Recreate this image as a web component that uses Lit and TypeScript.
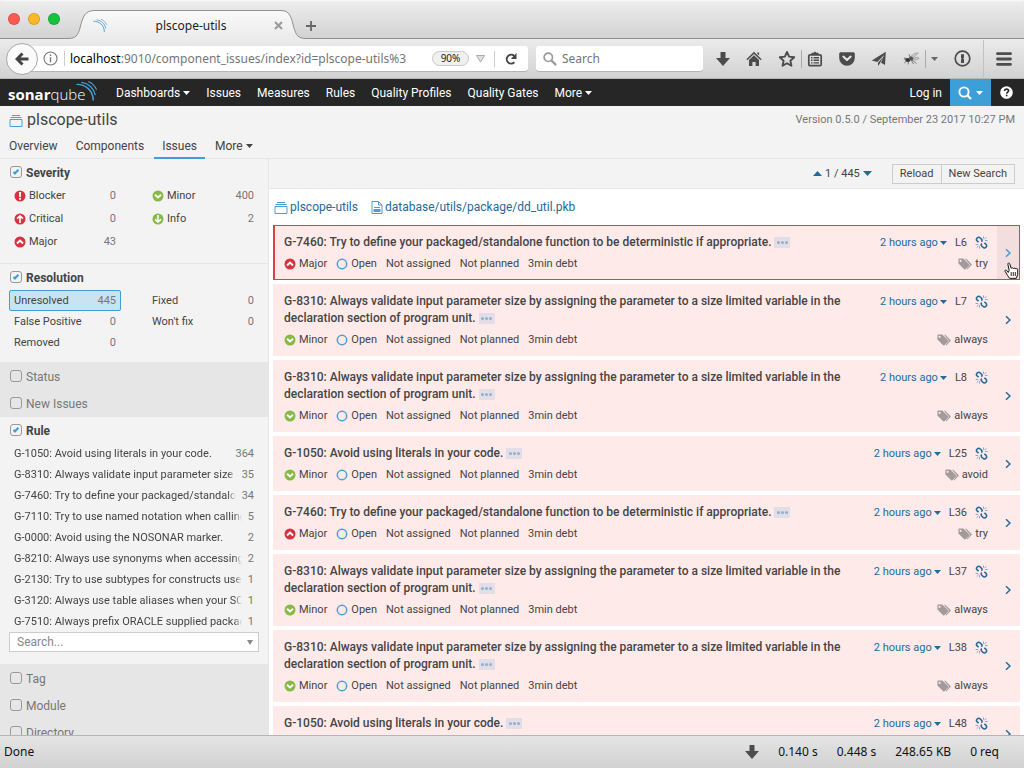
import { LitElement, html, css, nothing } from "lit";
import { customElement, property } from "lit/decorators.js";
import { classMap } from "lit/directives/class-map.js";

const waves = html`<svg viewBox="0 0 20 19" class="waves" aria-hidden="true">
  <g fill="none" stroke="#4b9fd5" stroke-linecap="round">
    <path stroke-width="1.400" d="M1 3.200C9 3.200 16.200 9 16.400 18.200" />
    <path stroke-width="1.200" d="M5.500 1.200C12 2 17 7 18.200 13" />
    <path stroke-width="1" d="M12 .6C15 1.800 18 4.500 19.400 8" />
  </g>
</svg>`;

const projectIcon = html`<svg viewBox="0 0 14 13" width="14" height="13" aria-hidden="true">
  <g fill="none" stroke="#4b9fd5">
    <path d="M1 5.500h12v7H1z" stroke-linejoin="round" />
    <path d="M1.500 3.500h11M3 1.500h8" />
  </g>
</svg>`;

const fileIcon = html`<svg viewBox="0 0 12 13" width="12" height="13" aria-hidden="true">
  <path d="M1 .5h6.500l3.500 3.500v8.500H1zM7.500.5V4H11" fill="none" stroke="#4b9fd5" />
  <path d="M3 6h6v1H3zM2.500 8h7v3h-7z" fill="#4b9fd5" />
</svg>`;

const severityPaths: Record<string, unknown> = {
  Blocker: html`<svg viewBox="0 0 12 12" width="12" height="12" aria-hidden="true"><circle cx="6" cy="6" r="5.500" fill="#d4333f" /><path d="M4.900 2h2.200L6.800 7.200H5.200zM5.100 8.100h1.800v1.700H5.100z" fill="#fff" /></svg>`,
  Critical: html`<svg viewBox="0 0 12 12" width="12" height="12" aria-hidden="true"><circle cx="6" cy="6" r="5.500" fill="#d4333f" /><path d="M6 10V3M3.100 5.700 6 2.900l2.900 2.800" fill="none" stroke="#fff" stroke-width="1.600" /></svg>`,
  Major: html`<svg viewBox="0 0 12 12" width="12" height="12" aria-hidden="true"><circle cx="6" cy="6" r="5.500" fill="#d4333f" /><path d="M3 7.400 6 4.600l3 2.800" fill="none" stroke="#fff" stroke-width="2" /></svg>`,
  Minor: html`<svg viewBox="0 0 12 12" width="12" height="12" aria-hidden="true"><circle cx="6" cy="6" r="5.500" fill="#85bb43" /><path d="M3 4.700 6 7.500l3-2.800" fill="none" stroke="#fff" stroke-width="2" /></svg>`,
  Info: html`<svg viewBox="0 0 12 12" width="12" height="12" aria-hidden="true"><circle cx="6" cy="6" r="5.500" fill="#85bb43" /><path d="M6 2v7M3.100 6.300 6 9.100l2.900-2.800" fill="none" stroke="#fff" stroke-width="1.600" /></svg>`,
};

const openIcon = html`<svg viewBox="0 0 12 12" width="12" height="12" aria-hidden="true"><circle cx="6" cy="6" r="4.700" fill="none" stroke="#4b9fd5" stroke-width="1.500" /></svg>`;

const tagsIcon = html`<svg viewBox="0 0 14 12" width="14" height="12" aria-hidden="true">
  <path d="M7 .8h1.300l5.200 5.100c.4.400.4.800 0 1.200L9.200 11.400l-.6-.6 3.600-4z" fill="#a39a9b" />
  <path fill-rule="evenodd" d="M.4 1.300C.4.900.7.600 1.100.6h4.200L11.200 6.300c.4.400.4.800 0 1.200L7.400 11.300c-.4.400-.8.400-1.200 0L.4 5.500zM2.600 1.700a1.100 1.100 0 1 0 .01 0z" fill="#a39a9b" />
</svg>`;

const linkIcon = html`<svg viewBox="0 0 13 13" width="13" height="13" aria-hidden="true">
  <g fill="none" stroke="#236a97" stroke-width="1.600">
    <path d="M6.300 5.600C7.300 4.900 7.200 4 6.500 3.200L5.300 2C4.300 1.100 3.100 1.100 2.200 2S1.300 4 2.100 4.800L3.600 6.200" />
    <path d="M9.400 6.800 10.900 8.200c1 1 1 2.200.1 3.100s-2.200.9-3.100 0L6.600 10C5.900 9.200 5.800 8.400 6.700 7.500" />
  </g>
  <path d="M8.500.5v2.300M11.300 1.300 9.500 3.200M12.600 4.500H10M4.500 12.500v-2.300M.6 8.500h2.600M1.600 11.700l1.900-1.900" stroke="#7eabc6" stroke-width="1" />
</svg>`;

const chevron = html`<svg viewBox="0 0 6 10" width="6" height="10" aria-hidden="true"><path d="M1 1.200 5 5 1 8.800" fill="none" stroke="currentColor" stroke-width="1.500" /></svg>`;

const caret = html`<svg viewBox="0 0 7 4" width="7" height="4" class="caret" aria-hidden="true"><path d="M0 0h7L3.500 4z" fill="currentColor" /></svg>`;

const downArrow = html`<svg viewBox="0 0 14 14" width="14" height="14" aria-hidden="true"><path d="M4.500 0h5v6H14L7 14 0 6h4.500z" fill="#4c4c4c" /></svg>`;

const toolIcons = {
  home: html`<svg viewBox="0 0 16 16" width="16" height="16"><path d="M8 .8 15.600 8.200l-1 1L8 2.900l-6.600 6.300-1-1zM8 4.200l5 4.800v6H9.600v-4H6.400v4H3V9zM11.300 1.500h1.800v3l-1.800-1.700z" fill="#4c4c4c" /></svg>`,
  star: html`<svg viewBox="0 0 18 18" width="18" height="18"><path d="m9 1.900 2.100 4.700 5.100.6-3.800 3.500 1 5.100L9 13.200l-4.400 2.600 1-5.100L1.800 7.200l5.100-.6z" fill="none" stroke="#4c4c4c" stroke-width="1.900" stroke-linejoin="round" /></svg>`,
  list: html`<svg viewBox="0 0 16 16" width="16" height="16"><rect x="1.800" y="3.800" width="12.400" height="10.900" rx="1.300" fill="none" stroke="#4c4c4c" stroke-width="1.700" /><path d="M4.500 3.500V1.800h2L8 .6l1.500 1.200h2v1.700zM4 6h1.500v1.400H4zM6.500 6H12v1.400H6.500zM4 8.600h1.500V10H4zM6.500 8.600H12V10H6.500zM4 11.200h1.500v1.400H4zM6.500 11.200H12v1.400H6.500z" fill="#4c4c4c" /></svg>`,
  pocket: html`<svg viewBox="0 0 16 16" width="16" height="16"><path d="M1.800 1.300h12.400c1 0 1.600.7 1.600 1.600V7a7.800 7.800 0 0 1-15.600 0V2.900c0-.9.700-1.600 1.600-1.600z" fill="#4c4c4c" /><path d="m4.300 5.600 3.700 3.500 3.700-3.500" fill="none" stroke="#e8e8e8" stroke-width="2" stroke-linecap="round" stroke-linejoin="round" /></svg>`,
  plane: html`<svg viewBox="0 0 16 16" width="16" height="16"><path d="M14.800.8 14 14l-4-2.200L13 4 6.300 11 .8 9.600zM7 11.800 12 6 8.800 12.500 7 15z" fill="#4c4c4c" /></svg>`,
  bug: html`<svg viewBox="0 0 17 14" width="17" height="14"><path d="M7 5 12 1.300l3.200-.4-2.300 2.700L9 6zM9 6.500l6-1.300 1.200 1.200-2.500 1.400L9 8z" fill="#c9c9c9" stroke="#8d8d8d" stroke-width=".6" /><ellipse cx="4.800" cy="8" rx="2.600" ry="2.100" fill="#333" /><ellipse cx="8" cy="6.500" rx="2.200" ry="1.900" fill="#555" /><path d="M1 5.800 3.800 7M1.200 11l2.500-2M5.500 9.500 5 12.500M8 8l2.500 4M9 8l4.500 3.500M7 5 6 2.200M3 6.500.8 7.500" fill="none" stroke="#555" stroke-width=".7" /></svg>`,
  keyhole: html`<svg viewBox="0 0 17 17" width="17" height="17"><circle cx="8.500" cy="8.500" r="7.300" fill="none" stroke="#4c4c4c" stroke-width="1.700" /><path d="M7 4.200h3v3.300l-.8.900.8.600v4H7V9.700l.8-.9-.8-.6z" fill="#4c4c4c" /></svg>`,
  menu: html`<svg viewBox="0 0 16 14" width="16" height="14"><path d="M1.500 1.700h13M1.500 7h13M1.500 12.300h13" stroke="#4c4c4c" stroke-width="2.800" stroke-linecap="round" /></svg>`,
};

const resets = css`
  *, *::before, *::after { box-sizing: border-box; }
  a { color: inherit; text-decoration: none; }
  button, input, select { font: inherit; color: inherit; background: none; border: 0; margin: 0; padding: 0; border-radius: 0; outline: none; }
  svg { display: block; flex: none; }
`;

@customElement("browser-chrome")
class BrowserChrome extends LitElement {
  static styles = [resets, css`
    :host { display: block; font: 12px/16px "Noto Sans", "Open Sans", sans-serif; color: #1c1c1c; }
    .titlebar { display: flex; height: 39px; background: linear-gradient(#fafafa, #ececec 2px, #d2d2d2); box-shadow: inset 0 -1px #8f8f8f; border-radius: 4px 4px 0 0; }
    .lights { display: flex; gap: 8px; padding: 13px 8px 0; }
    .light { width: 12px; height: 12px; border-radius: 50%; border: 1px solid #0002; }
    .red { background: #fc5b52; }
    .amber { background: #fdb827; }
    .green { background: #13c43c; }
    .tab { display: grid; width: 238px; }
    .tab > * { grid-area: 1 / 1; }
    .label { display: grid; grid-template-columns: 20px 1fr 14px; align-items: center; padding: 12px 23px 0 25px; text-align: center; }
    .label button { justify-self: end; }
    .waves { width: 14px; height: 13px; }
    .plus { align-self: center; margin-top: 12px; }
    .toolbar { display: flex; align-items: center; height: 40px; padding: 0 6px; background: linear-gradient(#ebebeb, #d2d2d2); border-bottom: 1px solid #b8b8b8; }
    .back { display: grid; place-items: center; width: 32px; height: 32px; border: 1px solid #a8a8a8; border-radius: 50%; background: #fafafa; z-index: 1; flex: none; }
    .field { display: flex; align-items: center; height: 25px; background: #fff; border-radius: 3px; box-shadow: 0 1px #b5b5b5; }
    .address { flex: 474; min-width: 0; margin-left: -10px; padding: 0 11px 0 15px; }
    .address input { flex: 1; min-width: 0; color: #757575; height: 20px; }
    .info { padding-right: 6px; margin-right: 5px; border-right: 1px solid #ccc; }
    .host { color: #000; }
    .zoom { width: 37px; height: 15px; line-height: 13px; margin: 0 7px; border: 1px solid #c8c8c8; border-radius: 8px; background: #f0f0f0; font-size: 10px; color: #222; flex: none; }
    .reload { border-left: 1px solid #ccc; margin-left: 9px; padding-left: 10px; height: 16px; }
    .search { flex: 153; margin-left: 8px; padding: 0 7px; gap: 5px; min-width: 0; }
    .search input { flex: 1; min-width: 0; }
    .search input::placeholder { color: #757575; opacity: 1; }
    .tools { display: flex; align-items: center; justify-content: flex-end; gap: 16px; width: 315px; padding-right: 6px; flex: none; }
    .sep { width: 1px; height: 18px; background: #aaa; margin: 0 -11px; }
    .sep.tall { height: 38px; margin: 0 -4px; background: #c2c2c2; }
  `];

  render() {
    return html`
      <div class="titlebar">
        <div class="lights"><span class="light red"></span><span class="light amber"></span><span class="light green"></span></div>
        <div class="tab">
          <svg viewBox="0 0 238 39" width="238" height="39" aria-hidden="true">
            <defs><linearGradient id="t" x2="0" y2="1"><stop stop-color="#fafafa" /><stop offset="1" stop-color="#ebebeb" /></linearGradient></defs>
            <path d="M0 38.500C8 38.500 10 35 12 28 15 16 17 10.500 27 10.500H213C222 10.500 223 17 226 28 228 35 230 38.500 238 38.500V39H0z" fill="url(#t)" />
            <path d="M0 38.500C8 38.500 10 35 12 28 15 16 17 10.500 27 10.500H213C222 10.500 223 17 226 28 228 35 230 38.500 238 38.500" fill="none" stroke="#919191" />
          </svg>
          <div class="label">${waves}<span>plscope-utils</span>
            <button aria-label="Close tab"><svg viewBox="0 0 9 9" width="9" height="9"><path d="m1 1 7 7M8 1 1 8" stroke="#999" stroke-width="2" /></svg></button>
          </div>
        </div>
        <button class="plus" aria-label="New tab"><svg viewBox="0 0 10 10" width="10" height="10"><path d="M5 0v10M0 5h10" stroke="#666" stroke-width="1.800" /></svg></button>
      </div>
      <div class="toolbar">
        <button class="back" aria-label="Back"><svg viewBox="0 0 14 14" width="14" height="14"><path d="M13.500 7H3M7.500 1.500 2 7l5.500 5.500" fill="none" stroke="#444" stroke-width="3" /></svg></button>
        <div class="field address">
          <button class="info" aria-label="Site information"><svg viewBox="0 0 15 15" width="15" height="15"><circle cx="7.500" cy="7.500" r="6.500" fill="none" stroke="#777" stroke-width="1.100" /><path d="M6.800 3.500h1.400V5H6.800zM6.800 6.200h1.400v5H6.800z" fill="#777" /></svg></button>
          <label class="host" for="url">localhost</label><input id="url" value=":9010/component_issues/index?id=plscope-utils%3" />
          <button class="zoom">90%</button>
          <svg viewBox="0 0 9 8" width="9" height="8"><path d="M.5.500h8L4.500 7z" fill="#ddd" stroke="#aaa" /></svg>
          <button class="reload" aria-label="Reload page"><svg viewBox="0 0 12 14" width="12" height="14"><path d="M9.300 10.300A4.400 4.400 0 1 1 9.200 4" fill="none" stroke="#444" stroke-width="2" /><path d="M11.500 1v6H5.800z" fill="#444" /></svg></button>
        </div>
        <div class="field search">
          <svg viewBox="0 0 14 14" width="14" height="14"><circle cx="5.300" cy="5.300" r="4.200" fill="none" stroke="#999" stroke-width="1.700" /><path d="m8.500 8.500 4.600 4.600" stroke="#999" stroke-width="2.200" /></svg>
          <input placeholder="Search" aria-label="Search the web" />
        </div>
        <div class="tools">
          <button aria-label="Downloads">${downArrow}</button>
          <button aria-label="Home">${toolIcons.home}</button>
          <button aria-label="Bookmark">${toolIcons.star}</button>
          <span class="sep"></span>
          <button aria-label="Bookmarks list">${toolIcons.list}</button>
          <button aria-label="Pocket">${toolIcons.pocket}</button>
          <button aria-label="Send">${toolIcons.plane}</button>
          <button aria-label="Debugger">${toolIcons.bug}</button>
          <span class="sep"></span>
          <button aria-label="Debugger options"><svg viewBox="0 0 7 4" width="7" height="4"><path d="M0 0h7L3.500 4z" fill="#666" /></svg></button>
          <button aria-label="Passwords">${toolIcons.keyhole}</button>
          <span class="sep tall"></span>
          <button aria-label="Menu">${toolIcons.menu}</button>
        </div>
      </div>`;
  }
}

@customElement("site-header")
class SiteHeader extends LitElement {
  static styles = [resets, css`
    :host { display: block; }
    .nav { display: flex; align-items: center; height: 27px; background: #262626; color: #fff; padding-left: 8px; }
    .brand { display: flex; width: 90px; margin-right: 10px; font: 15px/22px "Open Sans", sans-serif; }
    .brand span { padding-top: 3px; }
    .brand b { font-weight: 700; }
    .brand i { font-style: normal; font-weight: 300; }
    .brand .waves { width: 21px; height: 20px; margin-left: -9px; margin-top: 1px; }
    .item { display: flex; align-items: center; gap: 3px; padding: 0 8px; }
    .spacer { flex: 1; }
    .find { display: flex; align-items: center; justify-content: center; gap: 4px; width: 41px; height: 27px; background: #3c9fd8; }
    .find .caret, .item .caret { margin-top: 1px; }
    .help { display: grid; place-items: center; width: 33px; padding-right: 3px; }
    .project { display: flex; justify-content: space-between; padding: 4px 9px 0 9px; height: 28px; }
    .name { display: flex; align-items: center; gap: 4px; margin: 0; font: 400 16px/20px Roboto, sans-serif; height: 20px; }
    .version { color: #777; font-size: 11px; line-height: 20px; }
    .tabs { display: flex; padding: 0 1px; height: 25px; border-bottom: 1px solid #e6e6e6; }
    .tab { display: flex; align-items: center; gap: 3px; height: 25px; padding: 0 8px; margin-right: 2px; border-bottom: 2px solid transparent; line-height: 20px; }
    .tab.on { border-color: #3c9fd8; }
  `];

  render() {
    return html`
      <nav class="nav">
        <a class="brand" href="#"><span><b>sonar</b><i>qube</i></span>${waves}</a>
        <a class="item" href="#">Dashboards ${caret}</a>
        ${["Issues", "Measures", "Rules", "Quality Profiles", "Quality Gates"].map((t) => html`<a class="item" href="#">${t}</a>`)}
        <a class="item" href="#">More ${caret}</a>
        <span class="spacer"></span>
        <a class="item" href="#">Log in</a>
        <button class="find" aria-label="Search">
          <svg viewBox="0 0 14 14" width="14" height="14"><circle cx="6" cy="6" r="4.600" fill="none" stroke="#fff" stroke-width="1.900" /><path d="m9.300 9.300 3.700 3.700" stroke="#fff" stroke-width="2.300" /></svg>${caret}
        </button>
        <button class="help" aria-label="Help"><svg viewBox="0 0 13 13" width="13" height="13"><circle cx="6.500" cy="6.500" r="6.300" fill="#fff" /><path d="M4.500 5c0-1.300.9-1.900 2-1.900s2.100.6 2.100 1.700c0 1.400-1.900 1.400-1.900 2.900" fill="none" stroke="#262626" stroke-width="1.600" /><path d="M5.800 8.700h1.700v1.600H5.800z" fill="#262626" /></svg></button>
      </nav>
      <div class="project">
        <h1 class="name">${projectIcon}<a href="#">plscope-utils</a></h1>
        <span class="version">Version 0.5.0 / September 23 2017 10:27 PM</span>
      </div>
      <nav class="tabs">
        ${["Overview", "Components", "Issues"].map((t) => html`<a href="#" class=${classMap({ tab: true, on: t === "Issues" })}>${t}</a>`)}
        <a href="#" class="tab">More ${caret}</a>
      </nav>`;
  }
}

interface Facet {
  name: string;
  open?: boolean;
  wide?: boolean;
  search?: boolean;
  items?: [string, string][];
}

const facets: Facet[] = [
  { name: "Severity", open: true, items: [["Blocker", "0"], ["Critical", "0"], ["Major", "43"], ["Minor", "400"], ["Info", "2"]] },
  { name: "Resolution", open: true, items: [["Unresolved", "445"], ["False Positive", "0"], ["Removed", "0"], ["Fixed", "0"], ["Won't fix", "0"]] },
  { name: "Status" },
  { name: "New Issues" },
  {
    name: "Rule", open: true, wide: true, search: true, items: [
      ["G-1050: Avoid using literals in your code.", "364"],
      ["G-8310: Always validate input parameter size", "35"],
      ["G-7460: Try to define your packaged/standalo", "34"],
      ["G-7110: Try to use named notation when calling", "5"],
      ["G-0000: Avoid using the NOSONAR marker.", "2"],
      ["G-8210: Always use synonyms when accessing", "2"],
      ["G-2130: Try to use subtypes for constructs use", "1"],
      ["G-3120: Always use table aliases when your SQ", "1"],
      ["G-7510: Always prefix ORACLE supplied packag", "1"],
    ],
  },
  { name: "Tag" },
  { name: "Module" },
  { name: "Directory" },
];

@customElement("facet-list")
class FacetList extends LitElement {
  static styles = [resets, css`
    :host { display: block; overflow: hidden; background: #f3f3f3; border-right: 1px solid #e6e6e6; }
    .facet { padding: 0 9px; border-bottom: 1px solid #e6e6e6; background: #e6e6e6; color: #777; }
    .facet.open { padding-bottom: 9px; background: #f3f3f3; color: #444; }
    .title { display: flex; align-items: center; gap: 4px; height: 26px; padding: 2px 0 0 1px; }
    .open .title { font-weight: 700; }
    .title input { appearance: none; display: grid; place-items: center; width: 12px; height: 12px; border: 1px solid #999; border-radius: 3px; margin-bottom: 2px; }
    .title input:checked::after { content: ""; width: 6px; height: 3px; border: solid #3c9fd8; border-width: 0 0 2px 2px; rotate: -45deg; margin-bottom: 2px; }
    .items { display: grid; grid-auto-flow: column; grid-template: repeat(3, 21px) / 1fr 1fr; column-gap: 26px; font-size: 11px; }
    .items.severity { grid-template-rows: repeat(3, 22px); row-gap: 1px; padding-bottom: 1px; }
    .items.wide { grid-auto-flow: row; grid-template: none / 1fr; grid-auto-rows: 21px; }
    .item { display: flex; align-items: center; gap: 6px; min-width: 0; padding: 0 4px; border: 1px solid transparent; border-radius: 2px; text-align: left; line-height: 18px; }
    .item.on { background: #c8e3f2; border-color: #3c9fd8; }
    .item svg { margin-right: -3px; }
    .text { flex: 1; overflow: hidden; white-space: nowrap; }
    .wide .text { mask-image: linear-gradient(to left, transparent, #000 8px); }
    .count { color: #777; }
    .pick { display: flex; align-items: center; height: 20px; margin-bottom: 3px; padding-right: 5px; border: 1px solid #ccc; background: #fff; color: #888; }
    .pick select { appearance: none; flex: 1; padding-left: 7px; line-height: 18px; }
  `];

  private item(facet: Facet, [label, count]: [string, string]) {
    return html`<button class=${classMap({ item: true, on: label === "Unresolved" })}>
      ${severityPaths[label] ?? nothing}<span class="text">${label}</span><span class="count">${count}</span>
    </button>`;
  }

  render() {
    return facets.map((f) => html`
      <section class=${classMap({ facet: true, open: !!f.open })}>
        <label class="title"><input type="checkbox" .checked=${!!f.open} />${f.name}</label>
        ${f.items ? html`<div class=${classMap({ items: true, wide: !!f.wide, severity: f.name === "Severity" })}>${f.items.map((i) => this.item(f, i))}</div>` : nothing}
        ${f.search ? html`<div class="pick"><select aria-label="Search rules"><option>Search...</option></select>
          <svg viewBox="0 0 6 5" width="6" height="5"><path d="M0 0h6L3 5z" fill="#888" /></svg></div>` : nothing}
      </section>`);
  }
}

interface Issue { message: string; severity: string; line: string; tag: string; }

const define = "G-7460: Try to define your packaged/standalone function to be deterministic if appropriate.";
const validate = "G-8310: Always validate input parameter size by assigning the parameter to a size limited variable in the declaration section of program unit.";
const literals = "G-1050: Avoid using literals in your code.";

const issues: Issue[] = [
  { message: define, severity: "Major", line: "L6", tag: "try" },
  { message: validate, severity: "Minor", line: "L7", tag: "always" },
  { message: validate, severity: "Minor", line: "L8", tag: "always" },
  { message: literals, severity: "Minor", line: "L25", tag: "avoid" },
  { message: define, severity: "Major", line: "L36", tag: "try" },
  { message: validate, severity: "Minor", line: "L37", tag: "always" },
  { message: validate, severity: "Minor", line: "L38", tag: "always" },
  { message: literals, severity: "Minor", line: "L48", tag: "avoid" },
];

@customElement("issue-card")
class IssueCard extends LitElement {
  @property({ attribute: false }) issue!: Issue;
  @property({ type: Boolean, reflect: true }) selected = false;

  static styles = [resets, css`
    :host { display: flex; position: relative; background: #ffeaea; border: solid transparent; border-width: 1px 1px 1px 2px; font-size: 11px; }
    :host([selected]) { border-color: #dd4040; }
    .body { flex: 1; min-width: 0; padding: 8px 9px 6px; }
    .top, .bottom { display: flex; justify-content: space-between; }
    .bottom { margin-top: 4px; height: 18px; line-height: 18px; }
    .message { max-width: 560px; margin: 0; font: 500 12px/17px Roboto, sans-serif; }
    .more { display: inline-flex; gap: 1px; align-items: center; justify-content: center; width: 16px; height: 11px; vertical-align: middle; background: #e2dde7; }
    .more i { width: 3px; height: 3px; border-radius: 50%; background: #8fb3cc; }
    .side { display: flex; align-items: center; gap: 8px; height: 17px; white-space: nowrap; }
    .side button { display: flex; align-items: center; gap: 2px; color: #236a97; }
    .meta { display: flex; gap: 9px; }
    .meta button, .tag { display: flex; align-items: center; gap: 3px; }
    .go { display: grid; place-items: center; width: 22px; color: #236a97; }
    :host([selected]) .go { background: #f2dede; color: #3c9fd8; }
    .pointer { position: absolute; right: 0; bottom: 0; }
  `];

  render() {
    const { message, severity, line, tag } = this.issue;
    return html`
      <div class="body">
        <div class="top">
          <h3 class="message">${message} <button class="more" aria-label="Rule details"><i></i><i></i><i></i></button></h3>
          <div class="side"><button>2 hours ago ${caret}</button><span>${line}</span><button aria-label="Permalink">${linkIcon}</button></div>
        </div>
        <div class="bottom">
          <div class="meta">
            <button>${severityPaths[severity]} ${severity}</button>
            <button>${openIcon} Open</button>
            <button>Not assigned</button><button>Not planned</button><button>3min debt</button>
          </div>
          <button class="tag">${tagsIcon} ${tag}</button>
        </div>
      </div>
      <button class="go" aria-label="Open issue">${chevron}</button>
      ${this.selected ? html`<svg class="pointer" viewBox="0 0 15 17" width="15" height="17" aria-hidden="true">
        <path d="M4.200 10.500 2.600 8.400C1.900 7.500.6 8.300 1.100 9.300L3.600 13.500 5.500 16.300H12.300L13.700 12.500V7.500C13.600 6.300 12.100 6.300 11.900 7.100 11.700 5.900 9.900 5.800 9.600 6.700 9.200 5.600 7.500 5.600 7.200 6.400L5.800 1.900C5.300.5 3.500 1 3.900 2.400L5.200 8.500z" fill="#fff" stroke="#111" stroke-linejoin="round" />
        <path d="M7.200 10v4M9.300 10v4M11.300 10v4" stroke="#111" stroke-width=".9" />
      </svg>` : nothing}`;
  }
}

@customElement("issue-panel")
class IssuePanel extends LitElement {
  static styles = [resets, css`
    :host { display: block; overflow: hidden; background: #fff; }
    .bar { display: flex; align-items: center; justify-content: flex-end; height: 30px; padding-right: 9px; background: #f3f3f3; border-bottom: 1px solid #e6e6e6; font-size: 11px; }
    .pager { display: flex; align-items: center; gap: 3px; margin-right: 20px; }
    .pager button { color: #236a97; }
    .actions { display: flex; }
    .actions button { height: 20px; padding: 0 7px; border: 1px solid #ccc; line-height: 18px; }
    .actions button + button { margin-left: -1px; }
    .crumbs { display: flex; gap: 13px; height: 36px; padding: 0 5px; color: #236a97; }
    .crumbs a { display: flex; align-items: center; gap: 2px; }
    .cards { display: flex; flex-direction: column; gap: 4px; padding: 0 4px; }
  `];

  render() {
    return html`
      <div class="bar">
        <div class="pager">
          <button aria-label="Previous"><svg viewBox="0 0 9 5" width="9" height="5"><path d="M0 5h9L4.500 0z" fill="currentColor" /></svg></button>
          <span>1 / 445</span>
          <button aria-label="Next"><svg viewBox="0 0 9 5" width="9" height="5"><path d="M0 0h9L4.500 5z" fill="currentColor" /></svg></button>
        </div>
        <div class="actions"><button>Reload</button><button>New Search</button></div>
      </div>
      <div class="crumbs"><a href="#">${projectIcon} plscope-utils</a><a href="#">${fileIcon} database/utils/package/dd_util.pkb</a></div>
      <div class="cards">${issues.map((i, n) => html`<issue-card .issue=${i} ?selected=${n === 0}></issue-card>`)}</div>`;
  }
}

@customElement("app-root")
class AppRoot extends LitElement {
  static styles = [resets, css`
    :host { display: flex; flex-direction: column; height: 100vh; overflow: hidden; background: #f3f3f3; color: #444; font: 12px/18px Roboto, sans-serif; }
    .page { flex: 1; min-height: 0; display: grid; grid-template: minmax(0, 1fr) / 269px minmax(0, 1fr); }
    .status { display: flex; align-items: center; gap: 19px; height: 33px; padding: 0 25px 0 4px; border-top: 1px solid #b5b5b5; background: linear-gradient(#e4e4e4, #d2d2d2); color: #111; font: 12px/16px "Noto Sans", "Open Sans", sans-serif; }
    .done { flex: 1; }
  `];

  render() {
    return html`
      <browser-chrome></browser-chrome>
      <site-header></site-header>
      <main class="page"><facet-list></facet-list><issue-panel></issue-panel></main>
      <footer class="status"><span class="done">Done</span>${downArrow}<span>0.140 s</span><span>0.448 s</span><span>248.65 KB</span><span>0 req</span></footer>`;
  }
}
